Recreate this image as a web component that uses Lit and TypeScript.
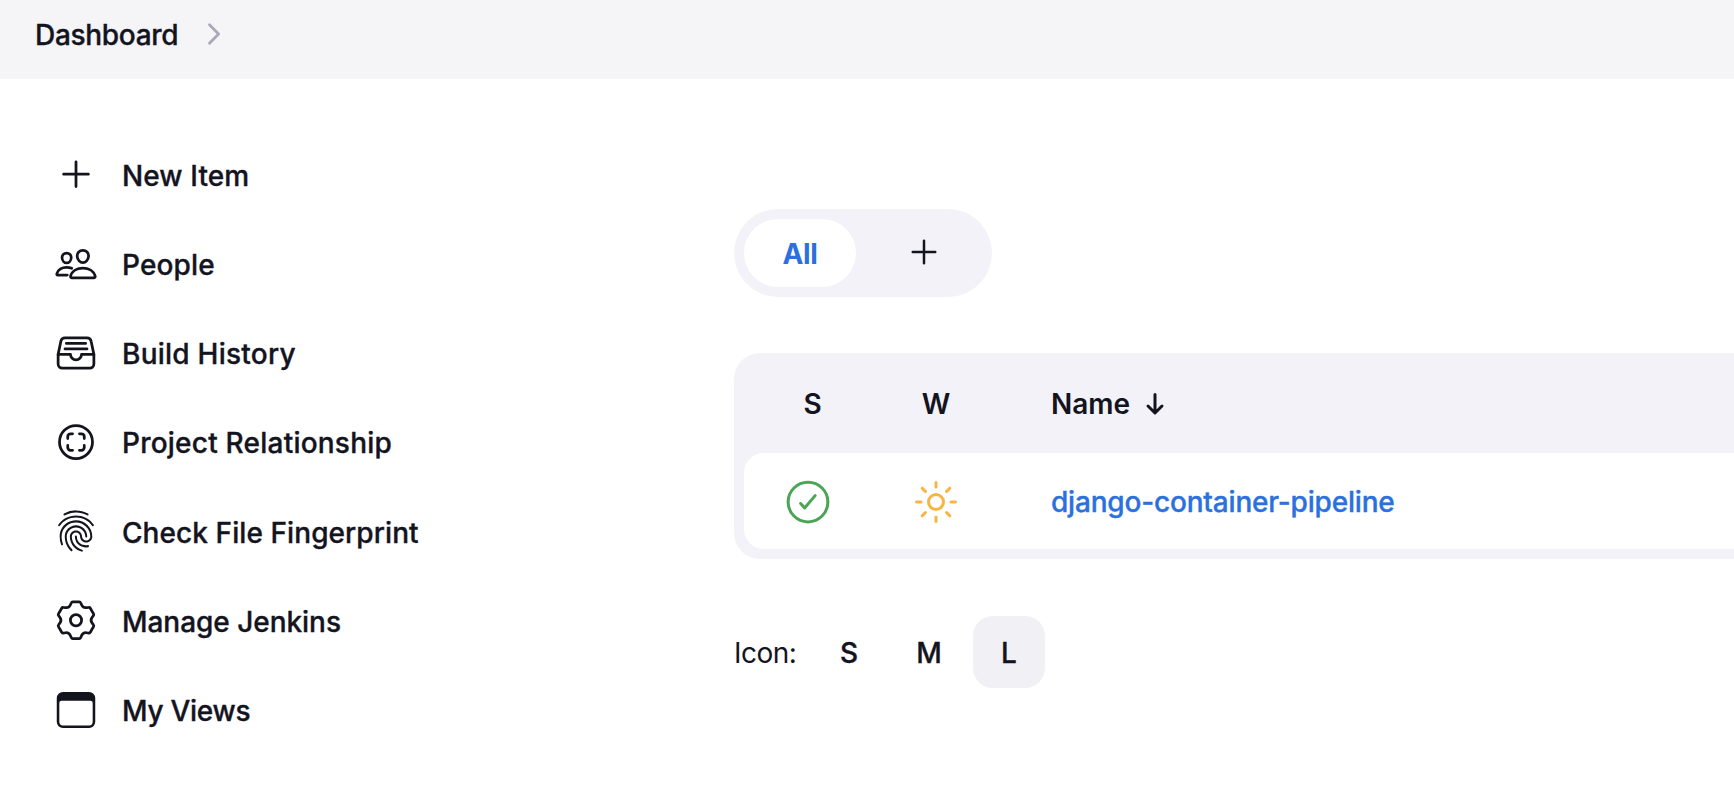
import { LitElement, html, svg, css } from "lit";
import { customElement } from "lit/decorators.js";

const plus = svg`<path d="M256 112v288M400 256H112" />`;

// Six identical teeth, each rotated 60 degrees round the centre.
function gearPath(): string {
  const parts: string[] = [];
  for (let k = 0; k < 6; k++) {
    const a = (k * Math.PI) / 3;
    const p = (x: number, y: number) =>
      `${(256 + x * Math.cos(a) - y * Math.sin(a)).toFixed(1)} ${(247 + x * Math.sin(a) + y * Math.cos(a)).toFixed(1)}`;
    parts.push(
      `${k === 0 ? "M" : "L"}${p(-66, -177)}L${p(-54, -204)}Q${p(-50, -214)} ${p(-38, -214)}` +
        `L${p(38, -214)}Q${p(50, -214)} ${p(54, -204)}L${p(66, -177)}` +
        `Q${p(82, -142)} ${p(120.3, -145.7)}`
    );
  }
  return parts.join("") + "Z";
}

const icons = {
  plus: svg`<path d="M256 102v288M400 246H112" />`,
  people: svg`
    <path d="M402 168c-2.93 40.67-33.1 72-66 72s-63.12-31.32-66-72c-3-42.31 26.37-72 66-72s69 30.46 66 72z" />
    <path d="M336 304c-65.17 0-127.84 32.37-143.54 95.41-2.08 8.34 3.15 16.59 11.72 16.59h263.65c8.57 0 13.77-8.25 11.72-16.59C463.85 335.36 401.18 304 336 304z" />
    <path d="M200 185.94c-2.34 32.48-26.72 58.06-53 58.06s-50.7-25.57-53-58.06C91.61 152.15 115.34 128 147 128s55.39 24.77 53 57.94z" />
    <path d="M206 306c-18.05-8.27-37.93-11.45-59-11.45-52 0-102.1 25.85-114.65 76.2-1.65 6.66 2.53 13.25 9.37 13.25H154" />`,
  tray: svg`
    <path d="M384 80H128c-26 0-43 14-48 40L48 272v112a48.14 48.14 0 0048 48h320a48.14 48.14 0 0048-48V272l-32-152c-5-27-23-40-48-40z" />
    <path d="M48 272h144M320 272h144M192 272a64 64 0 00128 0M144 144h224M128 208h256" />`,
  relationship: svg`
    <path d="M448 256c0-106-86-192-192-192S64 150 64 256s86 192 192 192 192-86 192-192z" />
    <path d="M296 352h24a32 32 0 0032-32v-24M352 216v-24a32 32 0 00-32-32h-24M216 352h-24a32 32 0 01-32-32v-24M160 216v-24a32 32 0 0132-32h24" />`,
  fingerprint: svg`
    <path class="solid" d="M390.42 75.28a10.45 10.45 0 01-5.32-1.44C340.72 50.08 302.35 40 256.35 40c-45.77 0-89.23 11.28-128.76 33.84C122 77 115.11 74.8 111.87 69a12.4 12.4 0 014.63-16.32A281.81 281.81 0 01256.35 16c49.23 0 92.23 11.28 139.39 36.48a12 12 0 014.85 16.08 11.3 11.3 0 01-10.17 6.72zm-330.79 126a11.73 11.73 0 01-6.7-2.16 12.26 12.26 0 01-2.78-16.8c22.89-33.6 52-60 86.69-78.48 72.58-38.84 165.51-39.12 238.32-.24 34.68 18.48 63.8 44.64 86.69 78a12.29 12.29 0 01-2.78 16.8 11.26 11.26 0 01-16.18-2.88c-20.8-30.24-47.15-54-78.36-70.56-66.34-35.28-151.18-35.28-217.29.24-31.44 16.8-57.79 40.8-78.59 71a10 10 0 01-9.02 5.08zM204.1 491a10.66 10.66 0 01-8.09-3.6C175.9 466.48 165 453 149.55 424c-16-29.52-24.27-65.52-24.27-104.16 0-71.28 58.71-129.36 130.84-129.36S387 248.56 387 319.84a11.56 11.56 0 11-23.11 0c0-58.08-48.32-105.36-107.72-105.36S148.4 261.76 148.4 319.84c0 34.56 7.39 66.48 21.49 92.4 14.8 27.6 25 39.36 42.77 58.08a12.67 12.67 0 010 17 12.44 12.44 0 01-8.56 3.68zm165.75-44.4c-27.51 0-51.78-7.2-71.66-21.36a129.1 129.1 0 01-55-105.36 11.57 11.57 0 1123.12 0 104.28 104.28 0 0044.84 85.44c16.41 11.52 35.6 17 58.72 17a147.41 147.41 0 0024-2.4c6.24-1.2 12.25 3.12 13.4 9.84a11.92 11.92 0 01-9.47 13.92 152.28 152.28 0 01-27.95 2.88zM323.38 496a13 13 0 01-3-.48c-36.76-10.56-60.8-24.72-86-50.4-32.37-33.36-50.16-77.76-50.16-125.28 0-38.88 31.9-70.56 71.19-70.56s71.2 31.68 71.2 70.56c0 25.68 21.5 46.56 48.08 46.56s48.08-20.88 48.08-46.56c0-90.48-75.13-163.92-167.59-163.92-65.65 0-125.75 37.92-152.79 96.72-9 19.44-13.64 42.24-13.64 67.2 0 18.72 1.61 48.24 15.48 86.64 2.32 6.24-.69 13.2-6.7 15.36a11.34 11.34 0 01-14.79-7 276.39 276.39 0 01-16.88-95c0-28.8 5.32-55 15.72-77.76 30.75-67 98.94-110.4 173.6-110.4 105.18 0 190.71 84.24 190.71 187.92 0 38.88-31.9 70.56-71.2 70.56s-71.2-31.68-71.2-70.56C303.5 294.4 282 273.52 255.42 273.52s-48.08 20.88-48.08 46.56c0 41 15.49 79.44 43.69 108.48 22.2 22.8 43.46 35.28 76.52 44.64a12 12 0 018.14 14.88 11.56 11.56 0 01-11.12 8.88z" />`,
  gear: svg`<circle cx="256" cy="247" r="65" /><path d=${gearPath()} />`,
  window: svg`
    <path class="solid" fill-rule="evenodd" d="M104 46h304a72 72 0 0172 72v276a72 72 0 01-72 72H104a72 72 0 01-72-72V118a72 72 0 0172-72zM88 148a26 26 0 00-26 26V394a42 42 0 0042 42h304a42 42 0 0042-42V174a26 26 0 00-26-26z" />`,
};

const tasks = [
  { label: "New Item", icon: icons.plus, cls: "t-new" },
  { label: "People", icon: icons.people, cls: "t-people" },
  { label: "Build History", icon: icons.tray, cls: "t-build" },
  { label: "Project Relationship", icon: icons.relationship, cls: "t-rel" },
  { label: "Check File Fingerprint", icon: icons.fingerprint, cls: "t-fp" },
  { label: "Manage Jenkins", icon: icons.gear, cls: "t-manage" },
  { label: "My Views", icon: icons.window, cls: "t-views" },
];

@customElement("app-root")
export class AppRoot extends LitElement {
  static styles = css`
    :host {
      display: block;
      height: 802px;
      overflow: hidden;
      background: #fff;
      color: #14141f;
      font: 500 28px/40px Inter, "Liberation Sans", sans-serif;
      white-space: nowrap;
    }
    .icon {
      display: block;
      flex: none;
      overflow: visible;
      fill: none;
      stroke: currentColor;
      stroke-width: 32;
      stroke-linecap: round;
      stroke-linejoin: round;
    }
    .solid { fill: currentColor; stroke: none; }
    .s40 { width: 40px; height: 40px; }
    .s44 { width: 44px; height: 44px; }
    .s48 { width: 48px; height: 48px; }

    .t-dash, .task span, .t-job, .size span { -webkit-text-stroke: 0.35px currentColor; }

    .crumbs {
      display: flex;
      align-items: center;
      height: 79px;
      padding: 0 0 10px 35px;
      box-sizing: border-box;
      background: #f5f5f8;
    }
    .t-dash { width: 144px; letter-spacing: -0.3px; }
    .chevron { width: 16px; height: 24px; margin-left: 27px; margin-bottom: 1px; color: #a9a9b9; stroke-width: 2.8; }

    .page { display: flex; }
    .side {
      width: 734px;
      box-sizing: border-box;
      padding: 51px 0 0 54px;
    }
    .task { display: flex; align-items: center; gap: 24px; height: 89.2px; }
    .task span { padding-top: 3px; }
    .t-new { letter-spacing: 0.1px; }
    .t-people { letter-spacing: 0.15px; }
    .t-build { letter-spacing: 0.24px; }
    .t-rel { letter-spacing: 0.22px; padding-bottom: 1px; }
    .t-fp { letter-spacing: 0.08px; }
    .t-manage { letter-spacing: -0.04px; }
    .t-views { letter-spacing: -0.28px; }
    .t-job { letter-spacing: -0.19px; }

    .main { flex: 1; min-width: 0; padding-top: 130px; }
    .tabs {
      display: flex;
      gap: 10px;
      width: 258px;
      height: 88px;
      padding: 10px;
      box-sizing: border-box;
      border-radius: 44px;
      background: #f3f2f8;
    }
    .tab {
      display: flex;
      flex: none;
      align-items: center;
      justify-content: center;
      width: 112px;
      height: 68px;
      border-radius: 34px;
    }
    .tab.active { background: #fff; color: #2b71de; font-weight: 700; }
    .tab.active span { padding-top: 2px; letter-spacing: -0.4px; }
    .tab.add { width: 116px; padding-bottom: 2px; box-sizing: border-box; }

    .table {
      margin-top: 56px;
      padding: 0 0 10px 10px;
      border-radius: 26px 0 0 26px;
      background: #f3f2f8;
    }
    .row { display: grid; grid-template-columns: 128px 128px 1fr; align-items: center; justify-items: center; }
    .head { height: 100px; font-weight: 600; }
    .head > * { padding-top: 2px; }
    .head .first { padding-left: 9px; }
    .name { justify-self: start; margin-left: 51px; display: flex; align-items: center; gap: 15px; }
    .arrow { width: 20px; height: 24px; stroke-width: 3; }
    .body { height: 96px; border-radius: 20px 0 0 20px; background: #fff; }
    .body .icon { margin-top: 2px; }
    .green { color: #4ba555; }
    .orange { color: #f8b544; }
    .link { color: #2b71de; padding-top: 1px; }

    .sizes { display: flex; align-items: center; margin-top: 57px; height: 72px; }
    .sizes .label { font-weight: 400; width: 79px; letter-spacing: -0.5px; }
    .size {
      display: flex;
      align-items: center;
      justify-content: center;
      width: 72px;
      height: 72px;
      margin-right: 8px;
      border-radius: 20px;
    }
    .size.on { background: #f0f0f5; }
    .sizes span { padding-top: 1px; }
  `;

  render() {
    return html`
      <div class="crumbs">
        <span class="t-dash">Dashboard</span>
        <svg class="icon chevron" viewBox="0 0 16 24"><path d="M3.5 2.8 12.6 12 3.5 21.2" /></svg>
      </div>
      <div class="page">
        <nav class="side">
          ${tasks.map(
            (t) => html`<div class="task">
              <svg class="icon s44" viewBox="0 0 512 512">${t.icon}</svg>
              <span class=${t.cls}>${t.label}</span>
            </div>`
          )}
        </nav>
        <main class="main">
          <div class="tabs">
            <div class="tab active"><span>All</span></div>
            <div class="tab add"><svg class="icon s40" viewBox="0 0 512 512">${plus}</svg></div>
          </div>
          <div class="table">
            <div class="row head">
              <span class="first">S</span>
              <span>W</span>
              <div class="name">
                <span>Name</span>
                <svg class="icon arrow" viewBox="0 0 20 24"><path d="M10 2.5v18.5M3 14l7 7 7-7" /></svg>
              </div>
            </div>
            <div class="row body">
              <svg class="icon s48 green" viewBox="0 0 512 512">
                <circle cx="256" cy="256" r="212" />
                <path d="M178 272l42 48 112-132" />
              </svg>
              <svg class="icon s48 orange" viewBox="0 0 512 512">
                <circle cx="256" cy="256" r="80" />
                <path d="M256 48v48M256 416v48M403.08 108.92l-33.94 33.94M142.86 369.14l-33.94 33.94M464 256h-48M96 256H48M403.08 403.08l-33.94-33.94M142.86 142.86l-33.94-33.94" />
              </svg>
              <div class="name link"><span class="t-job">django-container-pipeline</span></div>
            </div>
          </div>
          <div class="sizes">
            <span class="label">Icon:</span>
            <div class="size"><span>S</span></div>
            <div class="size"><span>M</span></div>
            <div class="size on"><span>L</span></div>
          </div>
        </main>
      </div>
    `;
  }
}
